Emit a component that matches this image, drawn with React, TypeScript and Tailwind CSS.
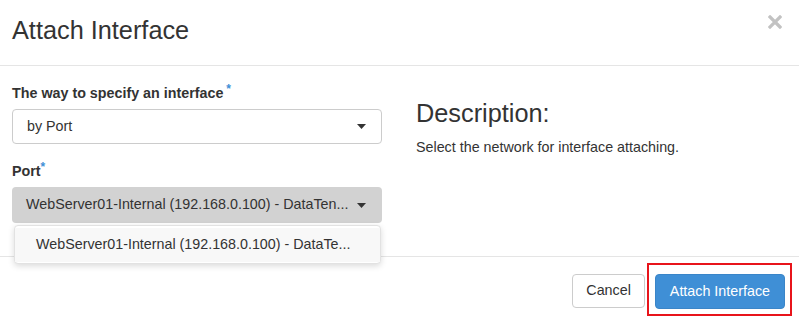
import React from "react";

const Caret = () => (
  <svg width="9" height="5" viewBox="0 0 9 5" className="shrink-0">
    <path d="M0 0 H9 L4.5 5 Z" fill="#333" />
  </svg>
);

export default function App() {
  return (
    <div
      className="w-[799px] h-[324px] bg-white text-[#333] overflow-hidden relative"
      style={{ fontFamily: '"Liberation Sans", Arial, sans-serif' }}
    >
      {/* Header */}
      <div className="h-[66px] border-b border-[#e5e5e5] flex items-center justify-between pl-3 pr-4">
        <h4 className="text-[25.3px] leading-none font-normal text-[#333] mt-[-4px]">Attach Interface</h4>
        <svg width="14" height="14" viewBox="0 0 14 14" className="mt-[-22px] mr-[1px]">
          <path d="M2 2 L12 12 M12 2 L2 12" stroke="#c2c2c2" strokeWidth="3.2" strokeLinecap="square" />
        </svg>
      </div>

      {/* Body */}
      <div className="h-[190px] flex px-3 pt-[17px]">
        <div className="w-[370px] flex flex-col">
          <label className="text-[14.3px] font-bold leading-5 mb-[5px]">
            The way to specify an interface
            <span className="text-[#3f8fd6] ml-[3px] relative top-[-5px] text-[12px]">*</span>
          </label>
          <div className="h-[35px] border border-[#ccc] rounded-[4px] flex items-center justify-between pl-[14px] pr-[15px] text-[14.3px]">
            <span>by Port</span>
            <Caret />
          </div>
          <label className="text-[14.3px] font-bold leading-5 mt-[17px] mb-[5px]">
            Port
            <span className="text-[#3f8fd6] relative top-[-5px] text-[12px]">*</span>
          </label>
          <div className="relative">
            <div className="h-[36px] rounded-[4px] bg-[#d2d2d2] flex items-center justify-between pl-[14px] pr-[16px] text-[14.3px] text-[#333]">
              <span className="whitespace-nowrap">WebServer01-Internal (192.168.0.100) - DataTen...</span>
              <Caret />
            </div>
            <div className="absolute left-[2px] right-[1px] top-[38px] h-[39px] bg-white rounded-[4px] border border-[#e2e2e2] shadow-[0_2px_6px_rgba(0,0,0,0.15)] z-10 flex items-center">
              <div className="w-full h-[34px] bg-[#f8f8f8] flex items-center pl-[21px] text-[14.3px] whitespace-nowrap">
                WebServer01-Internal (192.168.0.100) - DataTe...
              </div>
            </div>
          </div>
        </div>
        <div className="ml-[34px] flex flex-col pt-[18px]">
          <h3 className="text-[25.3px] leading-none font-normal">Description:</h3>
          <p className="text-[14.3px] mt-[11px]">Select the network for interface attaching.</p>
        </div>
      </div>

      {/* Footer */}
      <div className="border-t border-[#e5e5e5] flex justify-end items-start pr-[7px] pt-[17px]">
        <button className="h-[34px] px-[13px] border border-[#ccc] rounded-[4px] bg-white text-[14.3px] text-[#333]">
          Cancel
        </button>
        <div className="ml-[2px] mt-[-11px] border-2 border-[#e8141b] pl-[6px] pr-[5px] pt-[9px] pb-[5px]">
          <button className="h-[35px] px-[14px] rounded-[4px] bg-[#3f8fd6] text-white text-[14.3px] border border-[#3a85c8]">
            Attach Interface
          </button>
        </div>
      </div>
    </div>
  );
}
